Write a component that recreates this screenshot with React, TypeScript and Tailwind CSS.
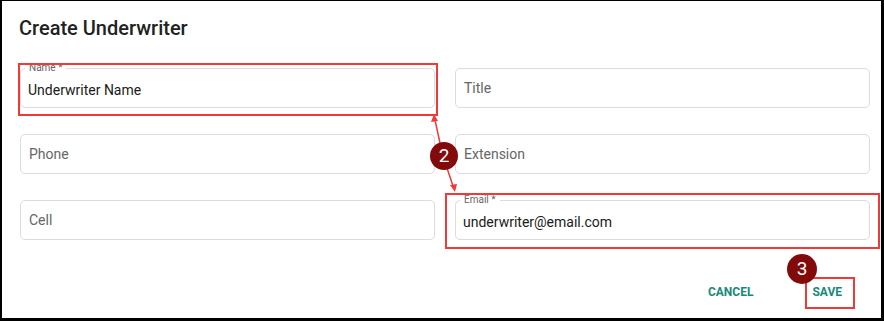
import React from 'react';

interface FieldProps {
  label: string;
  value?: string;
}

const Field: React.FC<FieldProps> = ({ label, value }) => {
  if (value) {
    return (
      <div className="relative h-[40px] rounded-[5px] border border-[#dcdcdc] flex items-center px-[7px] pt-[5px]">
        <span className="absolute -top-[7px] left-[4px] bg-white px-[4px] text-[10px] leading-[12px] text-[#666]">
          {label}
        </span>
        <span className="text-[14px] text-[#1a1a1a]">{value}</span>
      </div>
    );
  }
  return (
    <div className="h-[40px] rounded-[5px] border border-[#dcdcdc] flex items-center px-[8px]">
      <span className="text-[14px] text-[#666]">{label}</span>
    </div>
  );
};

const App: React.FC = () => {
  return (
    <div
      className="relative w-[884px] h-[321px] bg-white border-l-2 border-t border-r-[3px] border-b-[3px] border-black overflow-hidden"
      style={{ fontFamily: 'Roboto, "Liberation Sans", sans-serif' }}
    >
      <h2 className="pt-[13px] pl-[17px] text-[20px] leading-[28px] font-medium text-[#222]">Create Underwriter</h2>

      <div className="mt-[26px] pl-[18px] pr-[11px] grid grid-cols-2 gap-x-[20px] gap-y-[26px]">
        <Field label="Name *" value="Underwriter Name" />
        <Field label="Title" />
        <Field label="Phone" />
        <Field label="Extension" />
        <Field label="Cell" />
        <Field label="Email *" value="underwriter@email.com" />
      </div>

      <div className="mt-[37px] pr-[31px] flex justify-end items-center gap-[43px]">
        <button className="px-[8px] py-[6px] text-[12px] font-bold text-[#17897a]">CANCEL</button>
        <button className="px-[8px] py-[6px] text-[12px] font-bold text-[#17897a]">SAVE</button>
      </div>

      {/* annotation overlays */}
      <div className="absolute left-[16px] top-[62px] w-[420px] h-[53px] border-2 border-[#f03a3a] pointer-events-none" />
      <div className="absolute left-[443px] top-[192px] w-[435px] h-[56px] border-2 border-[#f03a3a] pointer-events-none" />
      <div className="absolute left-[803px] top-[276px] w-[50px] h-[32px] border-2 border-[#f03a3a] pointer-events-none" />

      <svg className="absolute -left-[2px] -top-[1px] pointer-events-none" width="884" height="321">
        <line x1="440" y1="143" x2="435" y2="120" stroke="#f03a3a" strokeWidth="1.5" />
        <polygon points="434,114 431,122 438,121" fill="#f03a3a" />
        <line x1="447" y1="168" x2="453" y2="186" stroke="#f03a3a" strokeWidth="1.5" />
        <polygon points="455,192 450,185 457,184" fill="#f03a3a" />
      </svg>

      <div className="absolute left-[428px] top-[141px] w-[28px] h-[28px] rounded-full bg-[#820a0a] text-white text-[19px] leading-[28px] text-center pointer-events-none">
        2
      </div>
      <div className="absolute left-[785px] top-[253px] w-[30px] h-[30px] rounded-full bg-[#820a0a] text-white text-[19px] leading-[30px] text-center pointer-events-none">
        3
      </div>
    </div>
  );
};

export default App;
